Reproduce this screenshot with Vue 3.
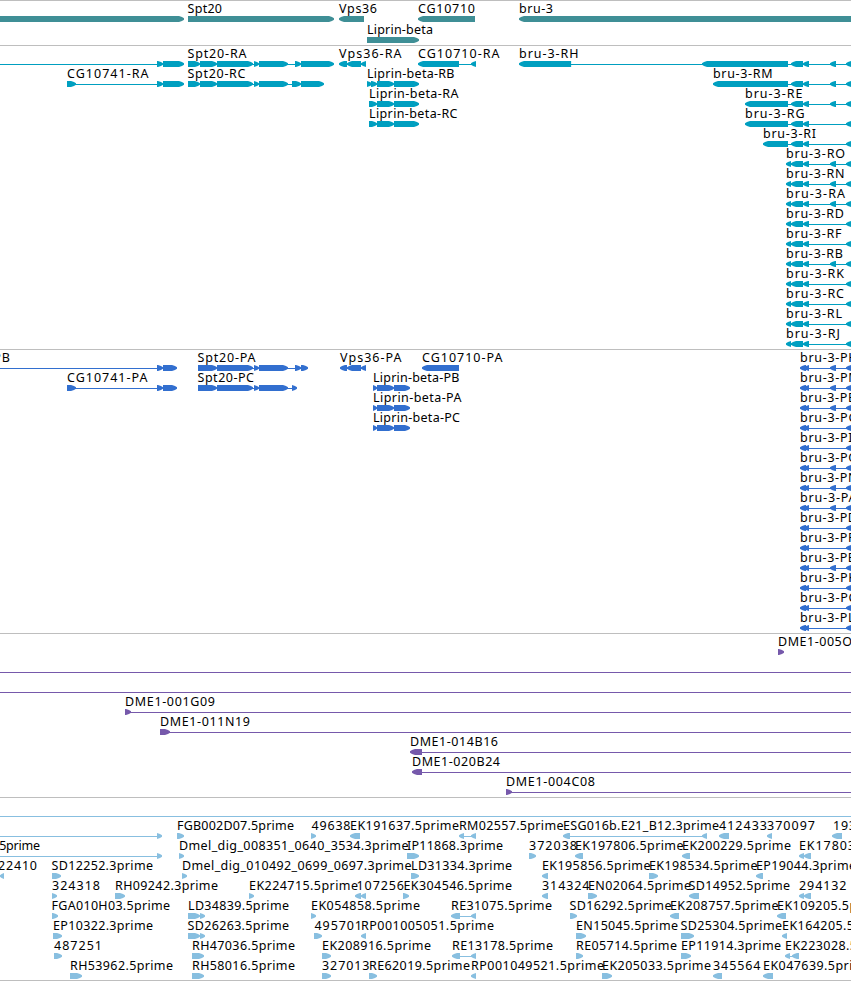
<script setup>
// Labels: [text, startX, endX]; lines: [x1, x2]; blocks: 'x1-x2>' or 'x1-x2<' by strand.
const row = (labels, lines, blocks) => ({
  labels: labels.map(([text, x, end]) => ({ text, x, width: end - x })),
  lines,
  blocks: blocks.split(' ').filter(Boolean).map(toPoints),
})

function toPoints(spec) {
  const forward = spec.endsWith('>')
  const [a, b] = spec.slice(0, -1).split('-').map(Number)
  const head = Math.min(5, b - a)
  const from = forward ? a : b
  const tip = forward ? b : a
  const s = forward ? 1 : -1
  const neck = tip - s * head
  return [
    [from, 13], [neck, 13], [neck + s * head * 0.6, 14], [tip, 15.3],
    [tip, 16.7], [neck + s * head * 0.6, 18], [neck, 19], [from, 19],
  ].map((p) => p.join(',')).join(' ')
}

const spt = '200-217> 217-253> 254-259> 259-288>'
const liprinTail = '377-394> 394-419>'
const bruShort = '791-803< 803-809< 846-852<'
const bruLong = bruShort + ' 830-836<'

const bruTranscripts = [
  ['O', 845, 1], ['N', 844.5, 1], ['A', 845, 1], ['D', 844, 0], ['F', 841.5, 0],
  ['B', 843, 1], ['K', 844, 0], ['C', 844, 0], ['L', 842, 0], ['J', 840, 0],
].map(([l, end, long]) =>
  row([['bru-3-R' + l, 786, end]], [[789, 851]], '786-791< ' + (long ? bruLong : bruShort)))

const proteinEnds = {
  H: 857.5, M: 859.5, E: 855, G: 857.5, I: 852.5, O: 858, N: 857.5,
  A: 856.5, D: 857, F: 854.5, B: 856, K: 856, C: 856.5, L: 854.5,
}
const protein = (l, long, labels = [], lines = [], blocks = '') =>
  row(
    [...labels, ['bru-3-P' + l, 800, proteinEnds[l]]],
    [...lines, [804, 851]],
    blocks + ' 800-806< 804-809< 846-852<' + (long ? ' 830-836<' : ''),
  )

const tracks = [
  {
    name: 'genes',
    rows: [
      row([['Spt20', 187.5, 222], ['Vps36', 339, 377], ['CG10710', 418, 475], ['bru-3', 519, 553]],
        [], '0-184> 188-334> 339-364< 418-475< 519-870<'),
      row([['Liprin-beta', 367, 433]], [], '367-419>'),
    ],
  },
  {
    name: 'transcripts',
    rows: [
      row([['Spt20-RA', 187.5, 246.5], ['Vps36-RA', 339, 401.5], ['CG10710-RA', 418, 499.5], ['bru-3-RH', 519, 578.5]],
        [[0, 159], [250, 256], [285, 297], [343, 364], [459, 473], [571, 704], [788, 851]],
        `157-163> 163-184> 188-200> ${spt} 295-301> 301-334> 339-347< 347-361< 361-366< 418-459< 471-476< 519-571.1< 702-788< ${bruLong}`),
      row([['CG10741-RA', 67, 148.5], ['Spt20-RC', 187.5, 245.5], ['Liprin-beta-RB', 367, 454.5], ['bru-3-RM', 713, 772.5]],
        [[74, 159], [250, 256], [285, 294], [788, 851]],
        `67-76> 157-163> 163-184> 188-200> ${spt} 292-301> 301-324> 367-372> 371-377> ${liprinTail} 713-788< ${bruLong}`),
      row([['Liprin-beta-RA', 369, 458.5], ['bru-3-RE', 745, 802.5]],
        [[788, 851]], `369-377> ${liprinTail} 745-788< ${bruLong}`),
      row([['Liprin-beta-RC', 369, 457.5], ['bru-3-RG', 745, 804.5]],
        [[788, 851]], `369-377> ${liprinTail} 745-788< ${bruShort}`),
      row([['bru-3-RI', 763, 816]], [[788, 851]], `763-788< ${bruShort}`),
      ...bruTranscripts,
    ],
  },
  {
    name: 'proteins',
    rows: [
      protein('H', 1,
        [['CG10741-PB', -71, 10], ['Spt20-PA', 197.5, 255.5], ['Vps36-PA', 340, 401.5], ['CG10710-PA', 422, 502.5]],
        [[0, 159], [250, 256], [285, 303], [343, 364]],
        '157-163> 163-177> 198-217> 217-253> 254-259> 259-288> 295-301> 301-308> 340-347< 347-361< 361-366< 422-459<'),
      protein('M', 1,
        [['CG10741-PA', 67, 147.5], ['Spt20-PC', 197.5, 254], ['Liprin-beta-PB', 373, 459.5]],
        [[74, 159], [250, 256], [285, 294]],
        '67-76> 157-163> 163-177> 198-217> 217-253> 254-259> 259-288> 292-297> 373-377> 377-394> 394-410>'),
      protein('E', 1, [['Liprin-beta-PA', 373, 461.5]], [], '373-377> 377-394> 394-410>'),
      protein('G', 0, [['Liprin-beta-PC', 373, 460]], [], '373-377> 377-394> 394-410>'),
      protein('I', 0), protein('O', 1), protein('N', 1), protein('A', 1), protein('D', 0),
      protein('F', 0), protein('B', 1), protein('K', 0), protein('C', 0), protein('L', 0),
    ],
  },
  {
    name: 'clones',
    rows: [
      row([['DME1-005O', 778, 852]], [], '778-784>'),
      row([], [[0, 851]], ''),
      row([], [[0, 851]], ''),
      row([['DME1-001G09', 125, 215]], [[127, 851]], '125-131>'),
      row([['DME1-011N19', 160, 250]], [[166, 851]], '160-170>'),
      row([['DME1-014B16', 410, 498]], [[422, 851]], '410-422<'),
      row([['DME1-020B24', 412, 500]], [[422, 851]], '412-422<'),
      row([['DME1-004C08', 506, 595]], [[508, 851]], '506-512>'),
    ],
  },
  {
    name: 'ests',
    rows: [
      row([], [[0, 851]], ''),
      row([['FGB002D07.5prime', 177, 294], ['49638', 311.5, 350.5], ['EK191637.5prime', 350, 459], ['RM02557.5prime', 459, 563.5],
        ['ESG016b.E21_B12.3prime', 563, 719], ['412433', 719, 767], ['370097', 767, 815], ['193', 833, 856]],
        [[0, 159], [462, 474], [568, 704]],
        '157-162> 177-184> 311-316> 350-360< 459-464< 471-476< 563-570< 702-707< 719-729< 767-772< 832-842<'),
      row([['.5prime', -4, 40], ['Dmel_dig_008351_0640_3534.3prime', 179, 408.5], ['IP11868.3prime', 407, 503], ['372038', 529, 577],
        ['EK197806.5prime', 575, 683.5], ['EK200229.5prime', 682, 791], ['EK17803', 799, 855]],
        [[0, 159]],
        '157-162> 179-184> 407-419> 529-536> 575-583< 682-690< 799-804< 804-811<'),
      row([['22410', -2, 37], ['SD12252.3prime', 51.5, 153], ['Dmel_dig_010492_0699_0697.3prime', 182, 411.5], ['LD31334.3prime', 411, 512],
        ['EK195856.5prime', 542, 650.5], ['EK198534.5prime', 649, 757.5], ['EP19044.3prime', 756, 856]],
        [], '0-4< 52-61> 182-187> 411-419> 542-548< 649-658> 756-763<'),
      row([['324318', 52, 100], ['RH09242.3prime', 115, 218], ['EK224715.5prime', 249, 358], ['107256', 356.5, 404], ['EK304546.5prime', 403.5, 512],
        ['314324', 542, 589.5], ['EN02064.5prime', 588, 691], ['SD14952.5prime', 688.5, 790], ['294132', 799, 846.5]],
        [], '52-57> 115-125> 249-254> 355-361< 361-366< 403-409> 542-548< 588-597> 689-699< 799-804< 804-811<'),
      row([['FGA010H03.5prime', 51.5, 170], ['LD34839.5prime', 188, 289], ['EK054858.5prime', 311, 420], ['RE31075.5prime', 451, 552],
        ['SD16292.5prime', 569.5, 671.5], ['EK208757.5prime', 670, 778.5], ['EK109205.5prime', 777, 886]],
        [[456, 474]], '52-58> 188-200> 200-205> 311-316> 451-460< 471-476< 570-577> 670-679< 777-786<'),
      row([['EP10322.3prime', 53, 153], ['SD26263.5prime', 187.5, 289], ['495701', 314.5, 362], ['RP001005051.5prime', 361, 494],
        ['EN15045.5prime', 576, 678], ['SD25304.5prime', 680.5, 782], ['EK164205.5prime', 782, 891]],
        [], '53-62> 188-200> 200-205> 314-322> 361-366< 576-586> 681-694> 782-787<'),
      row([['487251', 54, 102], ['RH47036.5prime', 192, 295], ['EK208916.5prime', 322, 431], ['RE13178.5prime', 452, 553],
        ['RE05714.5prime', 576, 677], ['EP11914.3prime', 681, 781], ['EK223028.5prime', 785, 894]],
        [[456, 474], [788, 794]], '54-62> 192-204> 322-331> 452-460< 471-476< 576-583> 681-691> 785-790< 792-799<'),
      row([['RH53962.5prime', 70, 173], ['RH58016.5prime', 192, 295], ['327013', 322, 369.5], ['RE62019.5prime', 369, 470],
        ['RP001049521.5prime', 471, 604], ['EK205033.5prime', 602, 711], ['345564', 713, 760.5], ['EK047639.5prime', 763, 872]],
        [], '70-82> 192-204> 322-331> 369-377> 471-476< 602-612> 713-722< 763-773<'),
    ],
  },
]
</script>

<template>
  <main class="browser">
    <section v-for="track in tracks" :key="track.name" class="track" :class="track.name">
      <svg v-for="(r, i) in track.rows" :key="i" class="row" width="851" height="20" viewBox="0 0 851 20">
        <rect v-for="(l, j) in r.lines" :key="'l' + j" :x="l[0]" y="16" :width="l[1] - l[0]" height="1" />
        <polygon v-for="(p, j) in r.blocks" :key="'b' + j" :points="p" />
        <text v-for="t in r.labels" :key="t.text" :x="t.x" y="10" :textLength="t.width">{{ t.text }}</text>
      </svg>
    </section>
  </main>
</template>

<style>
body {
  background: #fff;
}
</style>

<style scoped>
.browser {
  width: 851px;
  height: 981px;
  overflow: hidden;
  background: #fff;
}
.track {
  display: flex;
  flex-direction: column;
  padding: 2px 0 1px;
  border-top: 1px solid #bebebe;
}
.row {
  display: block;
  flex: none;
  overflow: visible;
}
.row text {
  font-family: "Noto Sans", "DejaVu Sans", sans-serif;
  font-size: 12.5px;
  fill: #000;
}
.genes {
  gap: 1px;
  fill: #3f8f96;
}
.transcripts {
  fill: #009fc0;
}
.proteins {
  fill: #326fcf;
}
.clones {
  fill: #7659ab;
}
.ests {
  padding-bottom: 0;
  border-bottom: 1px solid #bebebe;
  fill: #88bfe0;
}
</style>
